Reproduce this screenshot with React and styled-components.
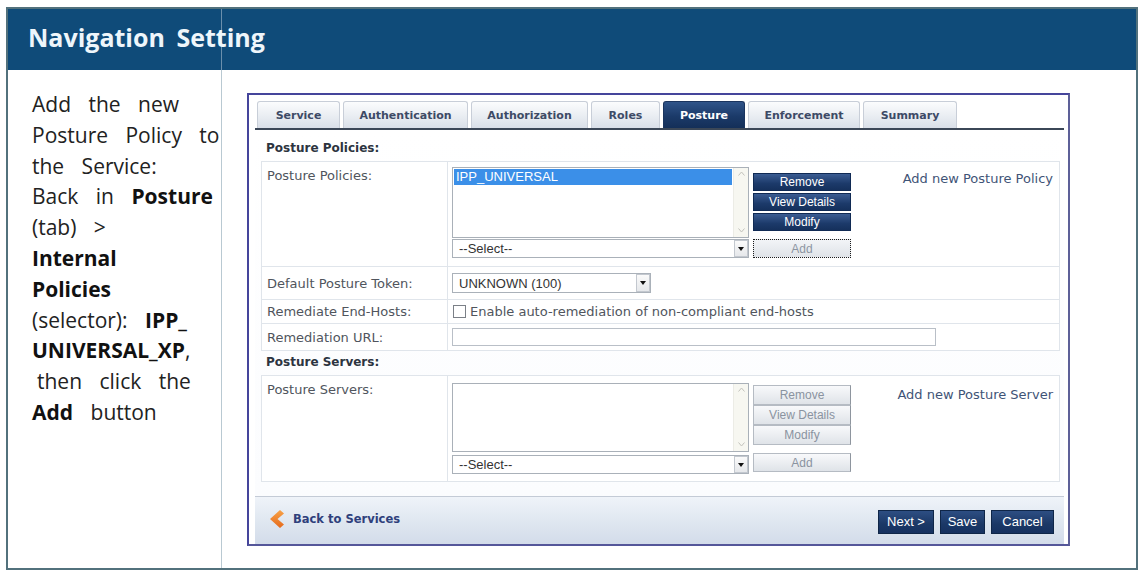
import styled, { createGlobalStyle, css } from "styled-components";

const GlobalStyle = createGlobalStyle`
	html, body {
		margin: 0;
		padding: 0;
		background: #fff;
	}
	body {
		font-family: "Open Sans", "Noto Sans", sans-serif;
	}
`;

const Page = styled.div`
	width: 1142px;
	height: 576px;
	box-sizing: border-box;
	padding: 7px 4px 6px 6px;
`;

const Frame = styled.div`
	width: 1132px;
	height: 563px;
	box-sizing: border-box;
	border: 2px solid #52717c;
	display: flex;
	flex-direction: column;
`;

const Header = styled.header`
	height: 61px;
	flex: none;
	display: flex;
	align-items: center;
	padding: 0 0 6px 20px;
	box-sizing: border-box;
	background: linear-gradient(
			to right,
			transparent 213px,
			#6b8fac 213px,
			#6b8fac 214px,
			transparent 214px
		),
		#0f4b79;
`;

const Title = styled.h1`
	margin: 0;
	font-size: 25px;
	font-weight: 700;
	color: #eef6fb;
	word-spacing: 5px;
`;

const Body = styled.div`
	flex: 1;
	display: grid;
	grid-template-columns: 214px 1fr;
`;

const Steps = styled.div`
	border-right: 1px solid #b9c9d2;
	padding: 19px 0 0 24px;
	font-size: 21px;
	line-height: 30.8px;
	word-spacing: 12px;
	color: #222;
`;

const StepLine = styled.div`
	white-space: nowrap;
	padding-left: ${(p) => p.$indent || 0}px;

	b {
		font-weight: 700;
		color: #111;
	}
`;

const Stage = styled.div`
	padding: 23px 0 0 25px;
`;

const Panel = styled.div`
	width: 823px;
	height: 453px;
	box-sizing: border-box;
	border: 2px solid #45459b;
	border-right-color: #5d6098;
	border-bottom-color: #55579a;
	background: #fff;
	padding: 6px 4px 0 6px;
	display: flex;
	flex-direction: column;
	font-family: "DejaVu Sans", Verdana, sans-serif;
`;

const TabBar = styled.nav`
	display: flex;
	gap: 3px;
	padding-left: 2px;
	border-bottom: 2px solid #3b4757;
	flex: none;
`;

const Tab = styled.div`
	width: ${(p) => p.$w}px;
	height: 27px;
	box-sizing: border-box;
	display: flex;
	align-items: center;
	justify-content: center;
	font-size: 11px;
	font-weight: 700;
	border: 1px solid #c8ced8;
	border-bottom: none;
	border-radius: 3px 3px 0 0;
	color: #3d4a66;
	background: linear-gradient(#fbfcfd, #e9edf2 55%, #d9dfe8);

	${(p) =>
		p.$active &&
		css`
			color: #fff;
			border-color: #1a345e;
			background: linear-gradient(#2f5489, #1b3a69 55%, #142f58);
		`}
`;

const Content = styled.section`
	flex: 1;
	display: flex;
	flex-direction: column;
	padding: 0 4px 0 6px;
	background: linear-gradient(#fff, #fbfcfe);
`;

const SectionTitle = styled.div`
	height: ${(p) => p.$h}px;
	box-sizing: border-box;
	padding: ${(p) => p.$pt}px 0 0 5px;
	font-size: 12px;
	font-weight: 700;
	color: #2d3440;
`;

const Table = styled.div`
	border: 1px solid #e0e5eb;
	border-bottom: none;
	background: #fff;
`;

const Row = styled.div`
	display: grid;
	grid-template-columns: 186px 1fr;
	height: ${(p) => p.$h}px;
	box-sizing: border-box;
	border-bottom: 1px solid #e0e5eb;
`;

const Label = styled.div`
	border-right: 1px solid #e0e5eb;
	padding: ${(p) => (p.$top ? "6px 0 0 5px" : "0 0 0 5px")};
	display: flex;
	align-items: ${(p) => (p.$top ? "flex-start" : "center")};
	font-size: 13px;
	color: #50555d;
	white-space: nowrap;
`;

const Value = styled.div`
	display: flex;
	align-items: ${(p) => (p.$top ? "flex-start" : "center")};
	padding: ${(p) => p.$pt || 0}px 0 0 4px;
	font-size: 13px;
	color: #50555d;
`;

const ListColumn = styled.div`
	width: 297px;
	display: flex;
	flex-direction: column;
	gap: ${(p) => p.$gap}px;
`;

const ListBox = styled.div`
	height: ${(p) => p.$h}px;
	box-sizing: border-box;
	border: 1px solid #a9b0b8;
	background: #fff;
	display: flex;
`;

const ListItems = styled.div`
	flex: 1;
	padding: 1px 1px 0 1px;
`;

const ListItem = styled.div`
	height: 16px;
	line-height: 16px;
	padding-left: 2px;
	background: #3b8fe8;
	color: #fff;
	font: 13px "Liberation Sans", Arial, sans-serif;
`;

const ScrollTrack = styled.div`
	width: 15px;
	background: #f7f7f1;
	border-left: 1px solid #ecece6;
	display: flex;
	flex-direction: column;
	justify-content: space-between;
	align-items: center;
	padding: 3px 0 4px;
	box-sizing: border-box;
`;

const SelectBox = styled.div`
	width: ${(p) => p.$w}px;
	height: ${(p) => p.$h}px;
	box-sizing: border-box;
	border: 1px solid #aab1b9;
	background: #fff;
	display: flex;
	align-items: center;
	padding-left: 6px;
	font: 13px "Liberation Sans", Arial, sans-serif;
	color: #333;
`;

const SelectArrow = styled.span`
	margin-left: auto;
	width: 14px;
	height: 100%;
	box-sizing: border-box;
	border: 1px solid #c3c8cf;
	background: linear-gradient(#fafafa, #e6e8eb);
	display: flex;
	align-items: center;
	justify-content: center;

	&::after {
		content: "";
		border-left: 3px solid transparent;
		border-right: 3px solid transparent;
		border-top: 4px solid #111;
	}
`;

const ButtonColumn = styled.div`
	width: 98px;
	margin: ${(p) => p.$top}px 0 0 4px;
	display: flex;
	flex-direction: column;
	gap: ${(p) => p.$gap}px;
`;

const ActionButton = styled.div`
	height: ${(p) => p.$h}px;
	margin-top: ${(p) => p.$mt || 0}px;
	box-sizing: border-box;
	display: flex;
	align-items: center;
	justify-content: center;
	font: 12px "Liberation Sans", Arial, sans-serif;

	${(p) =>
		p.$dark
			? css`
					color: #fff;
					border: 1px solid #102a54;
					background: linear-gradient(#3b5c92, #1c3a6a 60%, #15305c);
			  `
			: css`
					color: #8a93a0;
					border: 1px solid #b5bbc3;
					border-right-color: #8e959e;
					background: linear-gradient(#f8f9fb, #dfe3e8);
			  `}

	${(p) =>
		p.$focus &&
		css`
			color: #8d96a3;
			border: 1px dotted #1c1c1c;
			background: linear-gradient(#f2f4f7, #dfe3e8);
		`}
`;

const AddLink = styled.span`
	margin: 4px 6px 0 auto;
	font-size: 13px;
	color: #3f5477;
	white-space: nowrap;
`;

const CheckBox = styled.span`
	width: 11px;
	height: 11px;
	border: 1px solid #7b8087;
	background: #fff;
	margin: 0 4px 0 1px;
`;

const TextInput = styled.div`
	width: 484px;
	height: 18px;
	box-sizing: border-box;
	border: 1px solid #b9bfc7;
	background: #fff;
`;

const Filler = styled.div`
	flex: 1;
`;

const Footer = styled.footer`
	height: 48px;
	flex: none;
	box-sizing: border-box;
	border-top: 1px solid #c4cbd6;
	background: linear-gradient(#eff3f9, #dde5ef 60%, #d3dcea);
	display: flex;
	align-items: center;
	padding: 2px 10px 0 13px;
`;

const BackLink = styled.div`
	display: flex;
	align-items: center;
	gap: 8px;
	margin-top: -6px;
	font-size: 11.5px;
	font-weight: 700;
	color: #2f407c;
`;

const FooterButtons = styled.div`
	margin-left: auto;
	display: flex;
	gap: 6px;
`;

const FooterButton = styled.div`
	width: ${(p) => p.$w}px;
	height: 24px;
	box-sizing: border-box;
	display: flex;
	align-items: center;
	justify-content: center;
	font: 13px "Liberation Sans", Arial, sans-serif;
	color: #fff;
	border: 1px solid #0f2648;
	background: linear-gradient(#2d4e83, #1b3866 60%, #163160);
`;

const tabs = [
	["Service", 83],
	["Authentication", 125],
	["Authorization", 117],
	["Roles", 69],
	["Posture", 82],
	["Enforcement", 112],
	["Summary", 94],
];

function ScrollArrow({ up }) {
	return (
		<svg width="7" height="5" viewBox="0 0 7 5">
			<path
				d={up ? "M0.5 4.5 L3.5 1 L6.5 4.5" : "M0.5 0.5 L3.5 4 L6.5 0.5"}
				fill="none"
				stroke="#c2c2bc"
				strokeWidth="1"
			/>
		</svg>
	);
}

function Picker({ dark, listH, listGap, btnTop, btnH, btnGap, addGap, item, link }) {
	return (
		<>
			<ListColumn $gap={listGap}>
				<ListBox $h={listH}>
					<ListItems>{item && <ListItem>{item}</ListItem>}</ListItems>
					<ScrollTrack>
						<ScrollArrow up />
						<ScrollArrow />
					</ScrollTrack>
				</ListBox>
				<SelectBox $w={297} $h={19}>
					--Select--
					<SelectArrow />
				</SelectBox>
			</ListColumn>
			<ButtonColumn $top={btnTop} $gap={btnGap}>
				<ActionButton $dark={dark} $h={btnH}>
					Remove
				</ActionButton>
				<ActionButton $dark={dark} $h={btnH}>
					View Details
				</ActionButton>
				<ActionButton $dark={dark} $h={btnH}>
					Modify
				</ActionButton>
				<ActionButton $focus={dark} $h={19} $mt={addGap}>
					Add
				</ActionButton>
			</ButtonColumn>
			<AddLink>{link}</AddLink>
		</>
	);
}

function BackChevron() {
	return (
		<svg width="17" height="20" viewBox="0 0 17 20">
			<defs>
				<linearGradient id="chev" x1="0" y1="0" x2="0" y2="1">
					<stop offset="0" stopColor="#f7a248" />
					<stop offset="1" stopColor="#e56a1c" />
				</linearGradient>
			</defs>
			<path d="M12 1 L2 10 L12 19 L16 15.5 L9.5 10 L16 4.5 Z" fill="url(#chev)" />
		</svg>
	);
}

export default function App() {
	return (
		<>
			<GlobalStyle />
			<Page>
				<Frame>
					<Header>
						<Title>Navigation Setting</Title>
					</Header>
					<Body>
						<Steps>
							<StepLine>Add the new</StepLine>
							<StepLine>Posture Policy to</StepLine>
							<StepLine>the Service:</StepLine>
							<StepLine>
								Back in <b>Posture</b>
							</StepLine>
							<StepLine>(tab) &gt;</StepLine>
							<StepLine>
								<b>Internal</b>
							</StepLine>
							<StepLine>
								<b>Policies</b>
							</StepLine>
							<StepLine>
								(selector): <b>IPP_</b>
							</StepLine>
							<StepLine>
								<b>UNIVERSAL_XP</b>,
							</StepLine>
							<StepLine $indent={5}>then click the</StepLine>
							<StepLine>
								<b>Add</b> button
							</StepLine>
						</Steps>
						<Stage>
							<Panel>
								<TabBar>
									{tabs.map(([name, w]) => (
										<Tab key={name} $w={w} $active={name === "Posture"}>
											{name}
										</Tab>
									))}
								</TabBar>
								<Content>
									<SectionTitle $h={31} $pt={11}>
										Posture Policies:
									</SectionTitle>
									<Table>
										<Row $h={105}>
											<Label $top>Posture Policies:</Label>
											<Value $top $pt={5}>
												<Picker
													dark
													listH={71}
													listGap={1}
													btnTop={6}
													btnH={18}
													btnGap={2}
													addGap={6}
													item="IPP_UNIVERSAL"
													link="Add new Posture Policy"
												/>
											</Value>
										</Row>
										<Row $h={33}>
											<Label>Default Posture Token:</Label>
											<Value>
												<SelectBox $w={199} $h={20}>
													UNKNOWN (100)
													<SelectArrow />
												</SelectBox>
											</Value>
										</Row>
										<Row $h={24}>
											<Label>Remediate End-Hosts:</Label>
											<Value>
												<CheckBox />
												Enable auto-remediation of non-compliant end-hosts
											</Value>
										</Row>
										<Row $h={27}>
											<Label>Remediation URL:</Label>
											<Value>
												<TextInput />
											</Value>
										</Row>
									</Table>
									<SectionTitle $h={24} $pt={4}>
										Posture Servers:
									</SectionTitle>
									<Table>
										<Row $h={106}>
											<Label $top>Posture Servers:</Label>
											<Value $top $pt={7}>
												<Picker
													listH={69}
													listGap={3}
													btnTop={2}
													btnH={20}
													btnGap={0}
													addGap={8}
													link="Add new Posture Server"
												/>
											</Value>
										</Row>
									</Table>
									<Filler />
								</Content>
								<Footer>
									<BackLink>
										<BackChevron />
										Back to Services
									</BackLink>
									<FooterButtons>
										<FooterButton $w={56}>Next &gt;</FooterButton>
										<FooterButton $w={45}>Save</FooterButton>
										<FooterButton $w={63}>Cancel</FooterButton>
									</FooterButtons>
								</Footer>
							</Panel>
						</Stage>
					</Body>
				</Frame>
			</Page>
		</>
	);
}
